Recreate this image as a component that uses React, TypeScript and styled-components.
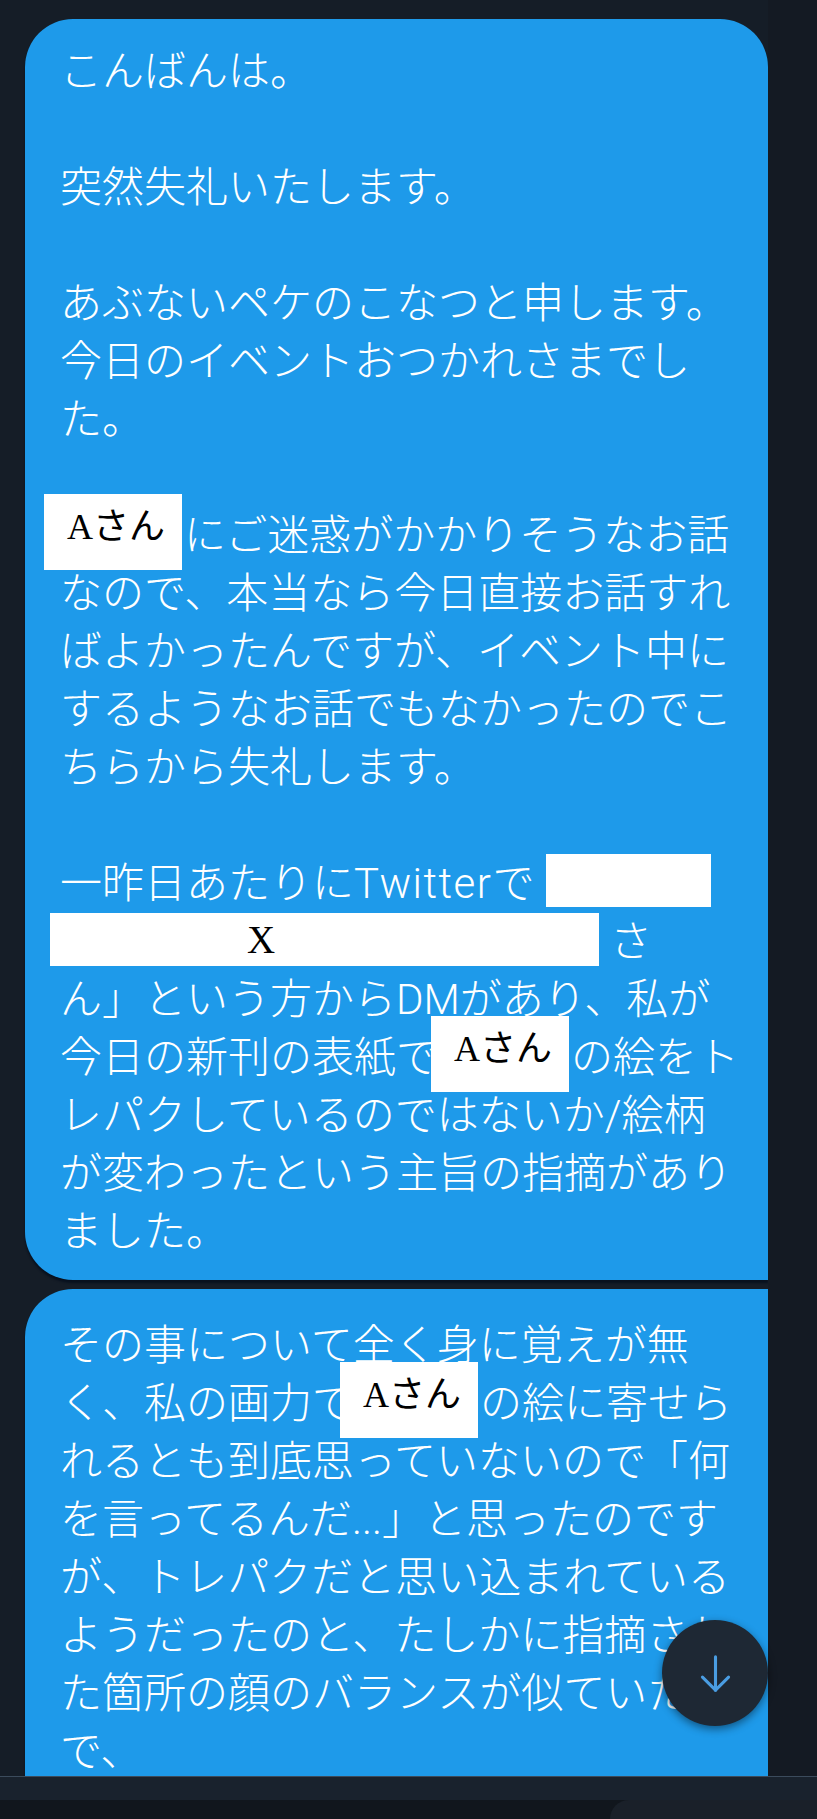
import React from 'react';
import styled, { createGlobalStyle } from 'styled-components';

const GlobalStyle = createGlobalStyle`
  html, body {
    margin: 0;
    padding: 0;
    background: #151d27;
  }
  body {
    width: 817px;
    height: 1819px;
    overflow: hidden;
    font-family: Roboto, "Noto Sans CJK JP", sans-serif;
  }
`;

const Page = styled.div`
  position: relative;
  width: 817px;
  height: 1819px;
  display: flex;
  flex-direction: column;
  background: #151d27;
`;

const Thread = styled.div`
  height: 1776px;
  display: flex;
  overflow: hidden;
`;

const Column = styled.div`
  width: 743px;
  padding: 19px 0 0 25px;
  display: flex;
  flex-direction: column;
  gap: 9px;
`;

const RightRail = styled.div`
  flex: 1;
  background: #141a23;
`;

const Bubble = styled.div<{ $top: number; $radius: string }>`
  background: #1e9aea;
  color: #ffffff;
  border-radius: ${p => p.$radius};
  padding: ${p => p.$top}px 0 19px 35px;
  box-shadow: 0 3px 2px rgba(4, 14, 28, 0.75);
  flex-shrink: 0;
`;

const Line = styled.div`
  display: flex;
  align-items: flex-start;
  height: 58px;
  line-height: 58px;
  font-size: 42px;
  font-weight: 300;
  white-space: nowrap;
`;

const Latin = styled.span`
  letter-spacing: 1.5px;
`;

const Tag = styled.span<{ $ml: number }>`
  display: inline-flex;
  align-items: center;
  justify-content: center;
  flex-shrink: 0;
  box-sizing: border-box;
  width: 138px;
  height: 76px;
  margin: -13px 2px 0 ${p => p.$ml}px;
  padding: 0 0 10px 6px;
  background: #ffffff;
  color: #000000;
  font-family: "Liberation Serif", "Noto Sans CJK JP", serif;
  font-size: 36px;
  font-weight: 400;
  line-height: 1;
`;

const Strip = styled.span<{ $w: number; $ml: number; $mt: number; $textX?: number }>`
  display: inline-flex;
  align-items: center;
  flex-shrink: 0;
  box-sizing: border-box;
  width: ${p => p.$w}px;
  height: 53px;
  margin: ${p => p.$mt}px 0 0 ${p => p.$ml}px;
  padding-left: ${p => p.$textX ?? 0}px;
  background: #ffffff;
  color: #000000;
  font-family: "Liberation Serif", serif;
  font-size: 39px;
  font-weight: 400;
  line-height: 1;
`;

const After = styled.span<{ $ml: number }>`
  margin-left: ${p => p.$ml}px;
`;

const BottomBar = styled.div`
  flex: 1;
  display: flex;
  flex-direction: column;
  border-top: 1px solid #3b4b5c;
`;

const NavTop = styled.div`
  height: 23px;
  background: #19222d;
`;

const NavBottom = styled.div`
  flex: 1;
  display: flex;
  background: #11161d;
`;

const NavSpacer = styled.div`
  flex: 1;
`;

const NavPanel = styled.div`
  width: 207px;
  background: #1a2029;
  border-top-left-radius: 28px;
`;

const ScrollButton = styled.button`
  position: absolute;
  left: 662px;
  top: 1620px;
  width: 106px;
  height: 106px;
  border: none;
  border-radius: 50%;
  padding: 0;
  background: #1e2834;
  box-shadow: 0 3px 8px rgba(0, 0, 0, 0.45);
  display: flex;
  align-items: center;
  justify-content: center;
`;

const ArrowDown = () => (
  <svg width="57" height="57" viewBox="0 0 24 24" fill="none" stroke="#4a9de2"
    strokeWidth="1.3" strokeLinecap="round" strokeLinejoin="round">
    <path d="M12 5v14" />
    <path d="M6.5 13.5 12 19l5.5-5.5" />
  </svg>
);

export default function App() {
  return (
    <Page>
      <GlobalStyle />
      <Thread>
        <Column>
          <Bubble $top={24} $radius="48px 48px 0 48px">
            <Line>こんばんは。</Line>
            <Line />
            <Line>突然失礼いたします。</Line>
            <Line />
            <Line>あぶないペケのこなつと申します。</Line>
            <Line>今日のイベントおつかれさまでし</Line>
            <Line>た。</Line>
            <Line />
            <Line>
              <Tag $ml={-16}>Aさん</Tag>
              <span>にご迷惑がかかりそうなお話</span>
            </Line>
            <Line>なので、本当なら今日直接お話すれ</Line>
            <Line>ばよかったんですが、イベント中に</Line>
            <Line>するようなお話でもなかったのでこ</Line>
            <Line>ちらから失礼します。</Line>
            <Line />
            <Line>
              <span>一昨日あたりに<Latin>Twitter</Latin>で</span>
              <Strip $w={165} $ml={12} $mt={-1} />
            </Line>
            <Line>
              <Strip $w={549} $ml={-10} $mt={0} $textX={197}>X</Strip>
              <After $ml={11}>さ</After>
            </Line>
            <Line>ん」という方からDMがあり、私が</Line>
            <Line>
              <span>今日の新刊の表紙で</span>
              <Tag $ml={-7}>Aさん</Tag>
              <span>の絵をト</span>
            </Line>
            <Line>レパクしているのではないか/絵柄</Line>
            <Line>が変わったという主旨の指摘があり</Line>
            <Line>ました。</Line>
          </Bubble>
          <Bubble $top={28} $radius="48px 0 0 48px">
            <Line>その事について全く身に覚えが無</Line>
            <Line>
              <span>く、私の画力で</span>
              <Tag $ml={-14}>Aさん</Tag>
              <span>の絵に寄せら</span>
            </Line>
            <Line>れるとも到底思っていないので「何</Line>
            <Line>を言ってるんだ...」と思ったのです</Line>
            <Line>が、トレパクだと思い込まれている</Line>
            <Line>ようだったのと、たしかに指摘され</Line>
            <Line>た箇所の顔のバランスが似ていたの</Line>
            <Line>で、</Line>
            <Line />
          </Bubble>
        </Column>
        <RightRail />
      </Thread>
      <BottomBar>
        <NavTop />
        <NavBottom>
          <NavSpacer />
          <NavPanel />
        </NavBottom>
      </BottomBar>
      <ScrollButton aria-label="最新のメッセージへ">
        <ArrowDown />
      </ScrollButton>
    </Page>
  );
}
